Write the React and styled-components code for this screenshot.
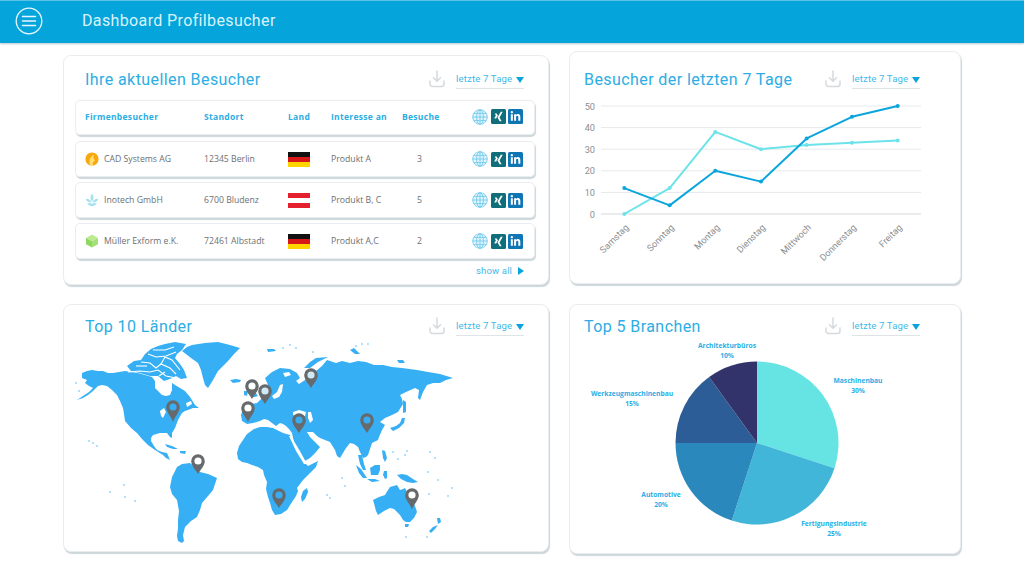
import React from "react";
import styled, { createGlobalStyle } from "styled-components";
import { FaXing, FaLinkedinIn } from "react-icons/fa";

const GlobalStyle = createGlobalStyle`
  html, body {
    margin: 0;
    background: #fff;
    font-family: "Roboto", "Liberation Sans", sans-serif;
  }
`;

const Page = styled.div`
  width: 1024px;
  height: 576px;
  overflow: hidden;
`;

const TopBar = styled.header`
  height: 43px;
  background: #05a5dc;
  border-top: 1px solid #5cc3e8;
  box-shadow: 0 1px 2px #b9c6cc;
  display: flex;
  align-items: center;
  padding-left: 15px;
  box-sizing: border-box;
`;

const MenuIcon = styled.svg`
  width: 28px;
  height: 28px;
  margin-top: -3px;
`;

const TopTitle = styled.h1`
  margin: -3px 0 0 39px;
  font-size: 16px;
  font-weight: 400;
  letter-spacing: 0.37px;
  color: #d9f3fb;
`;

const Columns = styled.main`
  display: grid;
  grid-template-columns: 486px 392px;
  column-gap: 20px;
  padding-left: 63px;
`;

const Column = styled.div`
  display: flex;
  flex-direction: column;
  gap: ${(p) => p.$gap}px;
  padding-top: ${(p) => p.$top}px;
`;

const Card = styled.section`
  height: ${(p) => p.$height}px;
  box-sizing: border-box;
  background: #fff;
  border: 1px solid #e9edef;
  border-radius: 8px;
  box-shadow: 1px 2px 1px #cdd6da;
`;

const CardHead = styled.div`
  display: flex;
  align-items: center;
  height: 20px;
  padding: ${(p) => p.$top}px ${(p) => p.$right}px 0 ${(p) => p.$left}px;
`;

const CardTitle = styled.h2`
  flex: 1;
  margin: -2px 0 0;
  font-size: 16px;
  font-weight: 400;
  letter-spacing: 0.42px;
  color: #2cade3;
`;

const DownloadIcon = styled.svg`
  width: 16px;
  height: 18px;
  margin-right: 11px;
  margin-top: -2px;
`;

const RangeSelect = styled.div`
  width: 68px;
  height: 15px;
  padding-bottom: 2px;
  display: flex;
  justify-content: space-between;
  align-items: center;
  border-bottom: 1px solid #dfe4e7;
  font-size: 9.6px;
  letter-spacing: 0.15px;
  color: #3fb9e9;
`;

const Caret = styled.span`
  width: 0;
  height: 0;
  border-left: 4px solid transparent;
  border-right: 4px solid transparent;
  border-top: 6px solid #0aa4dd;
  margin-top: 2px;
`;

const Table = styled.div`
  display: flex;
  flex-direction: column;
  gap: 5px;
  margin: 10px 13px 0 11px;
`;

const Row = styled.div`
  height: ${(p) => (p.$head ? 35 : 36)}px;
  box-sizing: border-box;
  display: grid;
  grid-template-columns: 119px 84px 43px 71px 70px 52px;
  align-items: center;
  padding: 0 0 ${(p) => (p.$head ? 2 : 0)}px 9px;
  border: 1px solid #e9edef;
  border-radius: 5px;
  box-shadow: 1px 2px 1px #cdd6da;
  font-family: "Open Sans", sans-serif;
  font-size: 8.7px;
  color: #6b6f72;
  margin-bottom: ${(p) => (p.$head ? 1 : 0)}px;
`;

const HeadCell = styled.span`
  font-weight: 700;
  font-size: 8.5px;
  letter-spacing: 0.3px;
  color: #2cade3;
  padding-bottom: 1px;
`;

const Company = styled.span`
  display: flex;
  align-items: center;
  gap: 5px;
`;

const CompanyLogo = styled.svg`
  width: 14px;
  height: 14px;
  flex: none;
`;

const Flag = styled.span`
  display: block;
  width: 22px;
  height: 15px;
  background: linear-gradient(
    ${(p) => p.$colors[0]} 0 33.3%,
    ${(p) => p.$colors[1]} 33.3% 66.6%,
    ${(p) => p.$colors[2]} 66.6%
  );
`;

const Count = styled.span`
  padding-left: 15px;
`;

const Links = styled.span`
  display: flex;
  align-items: center;
  gap: 2px;
`;

const Globe = styled.svg`
  width: 16px;
  height: 16px;
  margin-right: 1px;
`;

const SocialBadge = styled.span`
  width: 15px;
  height: 15px;
  border-radius: 1.5px;
  background: ${(p) => p.$bg};
  color: #fff;
  display: flex;
  align-items: center;
  justify-content: center;
  font-size: 11px;
`;

const ShowAll = styled.div`
  display: flex;
  justify-content: flex-end;
  align-items: center;
  gap: 6px;
  margin: 6px 24px 0 0;
  font-size: 9.6px;
  letter-spacing: 0.1px;
  color: #3fb9e9;
`;

const PlayCaret = styled.span`
  width: 0;
  height: 0;
  border-top: 4px solid transparent;
  border-bottom: 4px solid transparent;
  border-left: 6px solid #0aa4dd;
`;

const Chart = styled.svg`
  display: block;
  width: ${(p) => p.$w}px;
  height: ${(p) => p.$h}px;
  margin-top: ${(p) => p.$mt}px;
  margin-left: ${(p) => p.$ml}px;
`;

const AxisLabel = styled.text`
  font-family: "Roboto", sans-serif;
  font-size: 9.2px;
  fill: #8b8f92;
`;

const PieLabel = styled.text`
  font-family: "Open Sans", sans-serif;
  font-size: 6.7px;
  font-weight: 700;
  fill: #29aee6;
  text-anchor: middle;
`;

const visitors = [
  { name: "CAD Systems AG", place: "12345 Berlin", flag: "de", interest: "Produkt A", visits: 3, logo: "cad" },
  { name: "Inotech GmbH", place: "6700 Bludenz", flag: "at", interest: "Produkt B, C", visits: 5, logo: "inotech" },
  { name: "Müller Exform e.K.", place: "72461 Albstadt", flag: "de", interest: "Produkt A,C", visits: 2, logo: "mueller" },
];

const flags = {
  de: ["#111", "#d81818", "#ffd500"],
  at: ["#e4202f", "#fff", "#e4202f"],
};

const days = ["Samstag", "Sonntag", "Montag", "Dienstag", "Mittwoch", "Donnerstag", "Freitag"];
const dayX = [623.3, 668.7, 714.3, 760, 805.7, 851, 896.7];
const darkSeries = [12, 4, 20, 15, 35, 45, 50];
const lightSeries = [0, 12, 38, 30, 32, 33, 34];
const valueY = (v) => 214 - v * 2.16;

const branches = [
  { share: 30, color: "#66e3e3" },
  { share: 25, color: "#41b6d9" },
  { share: 20, color: "#2a88bc" },
  { share: 15, color: "#2d5d96" },
  { share: 10, color: "#33336b" },
];

const pieLabels = [
  ["Maschinenbau", "30%", 857, 383],
  ["Fertigungsindustrie", "25%", 833, 526],
  ["Automotive", "20%", 660, 497],
  ["Werkzeugmaschinenbau", "15%", 631, 396],
  ["Architekturbüros", "10%", 726, 348],
];

// map outlines in page coordinates, traced from the picture
const land = [
  // north america
  "82,373 87,371 92,370 98,371 103,371 108,373 113,373 119,372 125,371 131,372 138,373 145,375 152,377 155,381 155,388 159,392 162,395 166,396 170,395 172,390 172,383 175,385 180,388 185,391 190,397 195,405 199,408 193,408 188,410 185,411 182,413 178,420 175,428 172,433 172,438 170,437 167,433 160,433 153,435 151,438 151,441 154,446 157,450 162,452 167,453 170,460 166,458 163,455 155,450 148,445 142,439 137,433 131,428 125,421 124,414 123,408 120,401 117,395 112,390 107,386 102,385 98,386 93,391 88,395 83,398 77,400 83,396 89,392 93,388 89,386 85,383 87,380 82,378",
  // arctic archipelago, cut up by the channels below
  "127,366 134,361 141,360 145,354 151,349 158,346 165,344 175,342 186,344 182,350 177,354 175,358 180,364 184,370 187,378 181,379 176,376 170,379 164,381 158,376 150,376 140,373 131,371",
  // greenland
  "182,351 187,347 192,345 205,343 218,342 230,345 240,348 234,354 228,361 223,366 218,371 213,380 208,388 205,385 203,378 201,370 198,363 191,358",
  // iceland
  "230,380 236,379 241,380 240,382 233,383",
  // uk, ireland
  "249,386 254,383 255,392 258,396 251,398 252,392",
  "244,391 248,391 247,396 244,395",
  // south america
  "172,477 175,471 177,467 182,464 190,463 195,467 200,472 208,474 217,478 215,484 213,490 208,496 202,503 200,510 197,517 191,521 185,527 183,535 184,541 182,543 178,541 177,536 178,528 178,520 179,511 177,500 172,494 170,487",
  // cuba, hispaniola
  "165,444 172,446 178,449 173,449 167,447",
  "180,451 186,451 185,454 180,453",
  // eurasia
  "241,415 244,406 251,404 257,403 262,398 266,392 268,385 265,378 272,372 280,368 290,369 297,373 300,378 296,381 299,384 305,380 310,376 316,371 322,366 327,360 336,363 342,361 350,363 358,361 366,362 374,365 383,365 392,367 402,368 417,370 428,372 440,374 453,378 446,380 440,383 433,383 427,385 423,392 420,400 418,398 419,390 415,388 406,392 400,395 402,399 403,404 398,412 392,415 385,418 380,422 385,425 382,430 379,437 378,440 372,443 370,449 368,455 366,457 363,458 360,452 358,447 354,444 350,443 346,448 343,453 340,458 337,456 335,450 330,442 325,440 320,438 317,436 313,432 307,432 300,432 292,433 289,429 286,426 283,424 280,423 276,426 272,423 268,420 264,419 260,421 253,423 247,424 242,421",
  // malay peninsula
  "358,455 362,455 364,464 366,470 363,470 360,464",
  // arabia
  "292,433 300,430 307,432 311,437 315,442 320,447 316,452 310,458 303,462 299,456 295,447",
  // africa
  "237,453 239,446 243,440 247,434 254,429 260,427 267,427 273,428 279,431 283,433 290,435 293,443 297,451 303,461 308,466 318,461 316,467 310,473 303,480 300,484 297,488 298,491 296,496 292,502 287,510 281,514 275,515 272,510 270,503 268,497 266,489 267,482 264,475 263,470 258,467 252,465 247,463 242,462 238,459",
  // madagascar
  "307,488 308,492 305,499 302,502 301,497 303,491",
  // southeast asia islands
  "356,465 361,469 367,478 363,478 359,473",
  "370,468 375,465 380,465 380,470 378,475 371,475",
  "367,479 375,479 380,481 372,482",
  "384,471 387,471 387,478 385,479 383,475",
  "382,450 385,451 387,458 385,462 383,458",
  "397,475 402,474 407,475 413,479 418,482 413,483 407,482 401,479",
  // japan
  "390,428 396,426 400,423 402,418 405,418 404,423 399,428 393,431",
  "403,400 406,402 406,412 403,413 403,407",
  // australia
  "373,500 379,497 385,495 388,490 390,487 397,485 400,490 403,489 405,488 408,494 412,500 415,506 417,512 414,518 410,522 406,522 403,520 400,515 398,513 394,509 390,508 384,511 378,515 376,511 375,507",
  "405,524 409,524 408,527 405,527",
  // new zealand
  "437,518 440,518 441,522 438,524",
  "438,525 435,529 431,533 429,531 433,527",
  // svalbard, novaya zemlya, far north
  "267,349 274,349 276,351 268,352",
  "304,368 310,362 316,358 328,357 318,362 310,368",
  "350,350 354,348 360,354 355,354",
  "397,360 403,360 405,363 399,363",
];

// inland water, drawn over the land
const water = [
  "293,412 299,410 306,412 305,416 299,417 293,415",
  "308,412 311,412 313,420 310,423 308,418",
  "272,396 277,392 280,385 283,384 282,392 279,397 274,399",
  "283,373 289,372 291,375 285,377",
  "307,432 313,434 317,441 314,441 310,437",
  "289,436 291,436 301,453 307,464 304,464 296,451",
  "160,411 164,408 166,412 163,418 161,416",
  "168,405 172,404 171,408 168,408",
  "186,403 191,401 192,404 187,407",
];

// white channels between the arctic islands
const channels = [
  "128,372 140,371 150,372 158,370 166,376 176,378",
  "141,362 150,363 156,368 161,364 170,368 176,374",
  "148,354 156,357 166,356 176,352",
  "153,350 165,350 174,347",
  "161,364 165,357 172,360 180,370",
  "136,366 147,366",
  "159,376 165,372",
];

const specks = [
  [93, 443], [89, 441], [97, 446], [110, 492], [125, 497], [135, 501], [124, 485],
  [342, 478], [345, 486], [327, 495], [330, 498], [393, 452], [398, 459], [405, 455],
  [407, 451], [430, 452], [435, 458], [428, 472], [438, 480], [452, 488], [448, 496],
  [429, 494], [427, 537], [406, 537], [356, 346], [362, 344], [368, 344],
  [290, 345], [283, 348], [296, 348], [313, 352], [76, 383], [79, 391],
];

const pins = [
  [173, 407, 422, "#38adf2"],
  [252, 386, 399, "#fff"],
  [265, 391, 404, "#cfe9f7"],
  [248, 408, 422, "#fff"],
  [299, 420, 433, "#38adf2"],
  [198, 461, 474, "#fff"],
  [279, 495, 508, "#38adf2"],
  [311, 375, 388, "#cfe9f7"],
  [367, 420, 433, "#38adf2"],
  [412, 495, 509, "#fff"],
];

function slicePath(cx, cy, r, from, to) {
  const a = (from / 100) * Math.PI * 2;
  const b = (to / 100) * Math.PI * 2;
  const large = to - from > 50 ? 1 : 0;
  return `M${cx},${cy} L${cx + r * Math.sin(a)},${cy - r * Math.cos(a)} A${r},${r} 0 ${large} 1 ${cx + r * Math.sin(b)},${cy - r * Math.cos(b)} Z`;
}

function Download() {
  return (
    <DownloadIcon viewBox="0 0 16 18" fill="none" stroke="#d6dadd" strokeWidth="1.5" strokeLinecap="round" strokeLinejoin="round">
      <path d="M8 1v10M4.5 7.8 8 11.3l3.5-3.5" />
      <path d="M1 11v3a2.5 2.5 0 0 0 2.5 2.5h9A2.5 2.5 0 0 0 15 14v-3" />
    </DownloadIcon>
  );
}

function Range() {
  return (
    <RangeSelect>
      letzte 7 Tage
      <Caret />
    </RangeSelect>
  );
}

function LinkIcons() {
  return (
    <Links>
      <Globe viewBox="0 0 16 16" fill="#e3f5fc" stroke="#66c6ee" strokeWidth="0.8">
        <circle cx="8" cy="8" r="7.3" />
        <ellipse cx="8" cy="8" rx="3.4" ry="7.3" fill="none" />
        <path d="M8 .7v14.6M.7 8h14.6M1.8 4.4h12.4M1.8 11.6h12.4" fill="none" />
      </Globe>
      <SocialBadge $bg="#0f6e7a"><FaXing /></SocialBadge>
      <SocialBadge $bg="#0f76b5"><FaLinkedinIn /></SocialBadge>
    </Links>
  );
}

function Logo({ kind }) {
  if (kind === "cad") {
    return (
      <CompanyLogo viewBox="0 0 14 14">
        <circle cx="7" cy="7" r="6.6" fill="#f9a70f" />
        <path d="M5.5 13C3.2 10 4.8 5 8.8 2.600 8 5.600 8.5 7 10 8.400 8.400 9 7.400 10.600 7.800 13.200Z" fill="#ffdf70" />
      </CompanyLogo>
    );
  }
  if (kind === "inotech") {
    return (
      <CompanyLogo viewBox="0 0 14 14" fill="#a6e1ef">
        <path d="M7 .8C5 3.2 4.800 6 7 8.800 9.200 6 9 3.200 7 .8Z" />
        <path d="M.6 5.800c2.800-.4 5 1 5.900 3.800C3.800 9.800 1.600 8.400.6 5.800ZM13.400 5.800c-2.800-.4-5 1-5.900 3.800 2.700.2 4.900-1.200 5.900-3.800Z" />
        <path d="M2 10.800c2-1 3.800-1 5 .1 1.200-1.100 3-1.100 5-.1-1.800 1.700-3.500 2.200-5 2.400-1.500-.2-3.200-.7-5-2.400Z" />
      </CompanyLogo>
    );
  }
  return (
    <CompanyLogo viewBox="0 0 14 14">
      <path d="M7 .6 13 3.900 7 7.200 1 3.900Z" fill="#bdea90" />
      <path d="M1 3.900 7 7.200V13.600L1 10.300Z" fill="#8fd860" />
      <path d="M13 3.900 7 7.200V13.600L13 10.300Z" fill="#a3e078" />
    </CompanyLogo>
  );
}

function LineChart() {
  const series = (values, color) => (
    <g>
      <polyline
        points={values.map((v, i) => `${dayX[i]},${valueY(v)}`).join(" ")}
        fill="none"
        stroke={color}
        strokeWidth="2"
        strokeLinejoin="round"
      />
      {values.map((v, i) => (
        <circle key={i} cx={dayX[i]} cy={valueY(v)} r="2" fill={color} />
      ))}
    </g>
  );
  return (
    <Chart $w={391} $h={180} $mt={6} $ml={0} viewBox="569 96 391 180">
      {[0, 10, 20, 30, 40, 50].map((v) => (
        <g key={v}>
          <line x1="600" x2="920" y1={valueY(v)} y2={valueY(v)} stroke={v === 0 ? "#d3d7da" : "#e6e9eb"} />
          <AxisLabel x="594" y={valueY(v) + 3.5} textAnchor="end">{v}</AxisLabel>
        </g>
      ))}
      {days.map((d, i) => (
        <AxisLabel key={d} x={dayX[i] + 5} y="228" textAnchor="end" transform={`rotate(-45 ${dayX[i] + 5} 228)`}>
          {d}
        </AxisLabel>
      ))}
      {series(lightSeries, "#6ce3ea")}
      {series(darkSeries, "#0ba5dd")}
    </Chart>
  );
}

function WorldMap() {
  return (
    <Chart $w={390} $h={206} $mt={5} $ml={11} viewBox="75 342 390 206">
      {land.map((points, i) => (
        <polygon key={i} points={points} fill="#36aff5" />
      ))}
      {water.map((points, i) => (
        <polygon key={i} points={points} fill="#fff" />
      ))}
      {channels.map((points, i) => (
        <polyline key={i} points={points} fill="none" stroke="#fff" strokeWidth="1.1" />
      ))}
      {specks.map(([x, y], i) => (
        <circle key={i} cx={x} cy={y} r="0.9" fill="#8fd2f8" />
      ))}
      {pins.map(([x, y, tip, hole], i) => (
        <g key={i}>
          <path
            d={`M${x},${tip} C${x - 2},${y + 9} ${x - 6.8},${y + 5} ${x - 6.8},${y} A6.8,6.8 0 0 1 ${x + 6.8},${y} C${x + 6.8},${y + 5} ${x + 2},${y + 9} ${x},${tip}Z`}
            fill="#666a6c"
          />
          <circle cx={x} cy={y} r="3.6" fill={hole} />
        </g>
      ))}
    </Chart>
  );
}

function PieChart() {
  let start = 0;
  return (
    <Chart $w={391} $h={214} $mt={1} $ml={0} viewBox="569 338 391 214">
      {branches.map((b) => {
        const d = slicePath(756, 443, 81.5, start, start + b.share);
        start += b.share;
        return <path key={b.color} d={d} fill={b.color} />;
      })}
      {pieLabels.map(([name, share, x, y]) => (
        <g key={name}>
          <PieLabel x={x} y={y}>{name}</PieLabel>
          <PieLabel x={x} y={y + 10}>{share}</PieLabel>
        </g>
      ))}
    </Chart>
  );
}

function App() {
  return (
    <Page>
      <GlobalStyle />
      <TopBar>
        <MenuIcon viewBox="0 0 28 28" fill="none" stroke="#e6f7fd" strokeLinecap="round">
          <circle cx="14" cy="14" r="12.8" strokeWidth="1.3" />
          <path d="M7.5 9.5h13M7.5 14h13M7.5 18.5h13" strokeWidth="1.5" />
        </MenuIcon>
        <TopTitle>Dashboard Profilbesucher</TopTitle>
      </TopBar>
      <Columns>
        <Column $top={12} $gap={19}>
          <Card $height={230}>
            <CardHead $top={14} $left={21} $right={24}>
              <CardTitle>Ihre aktuellen Besucher</CardTitle>
              <Download />
              <Range />
            </CardHead>
            <Table>
              <Row $head>
                <HeadCell>Firmenbesucher</HeadCell>
                <HeadCell>Standort</HeadCell>
                <HeadCell>Land</HeadCell>
                <HeadCell>Interesse an</HeadCell>
                <HeadCell>Besuche</HeadCell>
                <LinkIcons />
              </Row>
              {visitors.map((v) => (
                <Row key={v.name}>
                  <Company>
                    <Logo kind={v.logo} />
                    {v.name}
                  </Company>
                  <span>{v.place}</span>
                  <Flag $colors={flags[v.flag]} />
                  <span>{v.interest}</span>
                  <Count>{v.visits}</Count>
                  <LinkIcons />
                </Row>
              ))}
            </Table>
            <ShowAll>
              show all
              <PlayCaret />
            </ShowAll>
          </Card>
          <Card $height={248}>
            <CardHead $top={12} $left={21} $right={24}>
              <CardTitle>Top 10 Länder</CardTitle>
              <Download />
              <Range />
            </CardHead>
            <WorldMap />
          </Card>
        </Column>
        <Column $top={8} $gap={20}>
          <Card $height={233}>
            <CardHead $top={18} $left={14} $right={40}>
              <CardTitle>Besucher der letzten 7 Tage</CardTitle>
              <Download />
              <Range />
            </CardHead>
            <LineChart />
          </Card>
          <Card $height={250}>
            <CardHead $top={12} $left={14} $right={40}>
              <CardTitle>Top 5 Branchen</CardTitle>
              <Download />
              <Range />
            </CardHead>
            <PieChart />
          </Card>
        </Column>
      </Columns>
    </Page>
  );
}

export default App;
